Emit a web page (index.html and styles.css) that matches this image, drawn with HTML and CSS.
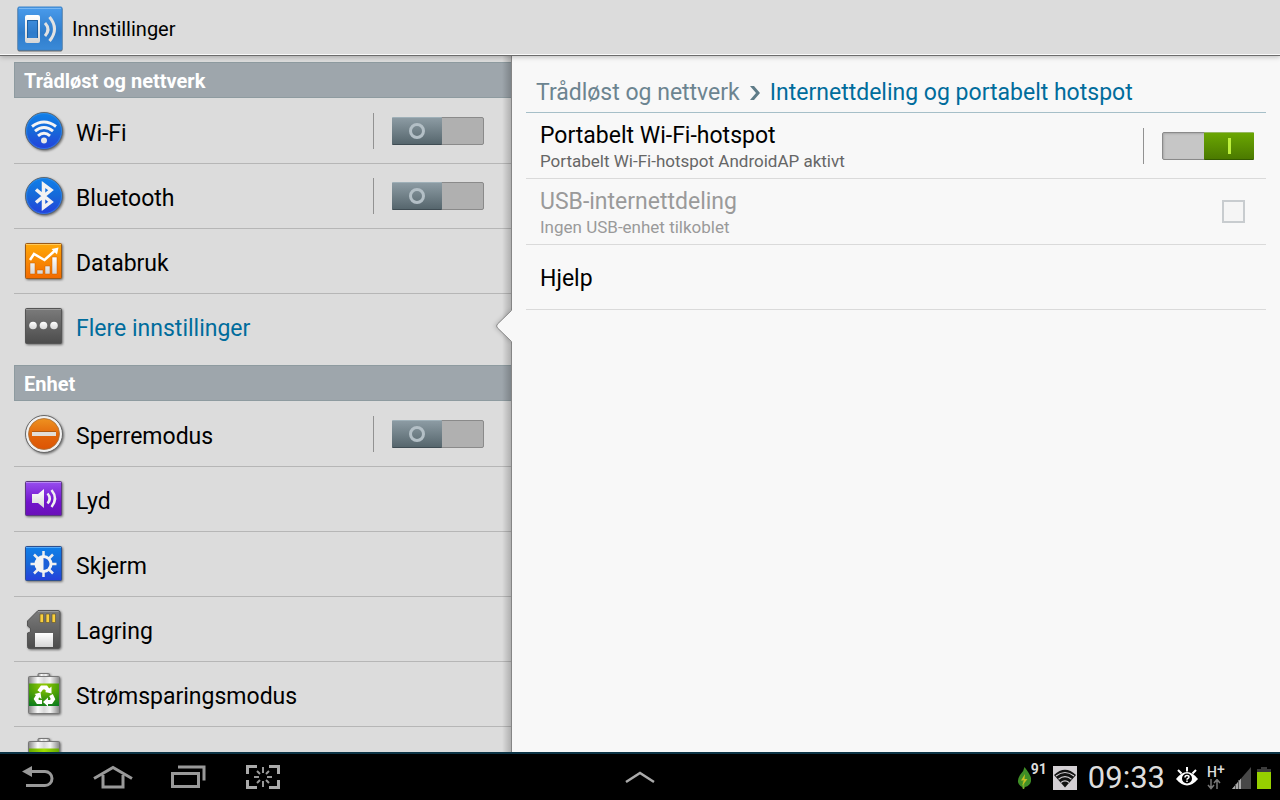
FILE: index.html
```html
<!DOCTYPE html>
<html lang="nb">
  <head>
    <meta charset="UTF-8" />
    <meta name="viewport" content="width=device-width, initial-scale=1" />
    <title>Innstillinger</title>
    <link rel="stylesheet" href="styles.css">
  </head>

  <body>
    <!-- shared gradients -->
    <svg class="defs" width="0" height="0" aria-hidden="true">
      <defs>
        <linearGradient id="blue" x2="0" y2="1"><stop offset="0" stop-color="#0f80ea"/><stop offset=".5" stop-color="#1668d8"/><stop offset="1" stop-color="#2540dc"/></linearGradient>
        <linearGradient id="sky" x2="0" y2="1"><stop offset="0" stop-color="#4a9cec"/><stop offset=".6" stop-color="#2f7ccb"/><stop offset="1" stop-color="#3a8ad8"/></linearGradient>
        <linearGradient id="orange" x2="0" y2="1"><stop offset="0" stop-color="#ffa90a"/><stop offset="1" stop-color="#f26a00"/></linearGradient>
        <linearGradient id="lock" x2="0" y2="1"><stop offset="0" stop-color="#ee9220"/><stop offset=".55" stop-color="#e2650a"/><stop offset="1" stop-color="#dc5404"/></linearGradient>
        <linearGradient id="purple" x2="0" y2="1"><stop offset="0" stop-color="#984ff0"/><stop offset=".6" stop-color="#7214cc"/><stop offset="1" stop-color="#6a10b8"/></linearGradient>
        <linearGradient id="grey" x2="0" y2="1"><stop offset="0" stop-color="#7b7b7b"/><stop offset="1" stop-color="#4c4c4c"/></linearGradient>
        <linearGradient id="white" x2="0" y2="1"><stop offset="0" stop-color="#fff"/><stop offset="1" stop-color="#d6d6d6"/></linearGradient>
        <linearGradient id="metal"><stop offset="0" stop-color="#888"/><stop offset=".3" stop-color="#fafafa"/><stop offset=".5" stop-color="#d8d8d8"/><stop offset=".7" stop-color="#f4f4f4"/><stop offset="1" stop-color="#888"/></linearGradient>
        <radialGradient id="green" cx=".5" cy=".1" r="1"><stop offset="0" stop-color="#95cd00"/><stop offset=".5" stop-color="#4a9f08"/><stop offset="1" stop-color="#087a1e"/></radialGradient>
        <linearGradient id="lime"><stop offset="0" stop-color="#68a800"/><stop offset=".5" stop-color="#a0e000"/><stop offset="1" stop-color="#68a800"/></linearGradient>
      </defs>
    </svg>

    <header class="action-bar">
      <svg class="app-icon" viewBox="0 0 46 46" width="46" height="46" aria-hidden="true">
        <rect x="1" y="1" width="44" height="43" rx="1" fill="url(#sky)" stroke="#3c83c8"/>
        <path d="M2 2.500h42" stroke="#79b8f4"/>
        <path fill-rule="evenodd" fill="url(#white)" d="M10 9h11q2 0 2 2v24q0 2-2 2H10q-2 0-2-2V11q0-2 2-2zm0 5v18h11V14z"/>
        <path fill="none" stroke="#1f5f9f" d="M10.500 32V14.500H20.500V32"/>
        <path d="M28 17q6 6.500 0 13M32.500 11q10 12 0 24" fill="none" stroke="#e2e2e2" stroke-width="3"/>
      </svg>
      <h1>Innstillinger</h1>
    </header>

    <main class="panes">
      <nav class="sidebar">
        <div class="sidebar-scroll">
          <h2>Trådløst og nettverk</h2>
          <ul>
            <li>
              <svg class="icon" viewBox="0 0 40 40" aria-hidden="true">
                <circle cx="20" cy="20" r="18.500" fill="url(#blue)" stroke="#5c6670"/>
                <circle cx="20" cy="20" r="17.500" fill="none" stroke="#3f9cf0" stroke-opacity=".5"/>
                <g fill="none" stroke="#f4f4f4" stroke-width="3">
                  <path d="M8 15.500q12-9 24 0"/>
                  <path d="M11 20.200q9-7.500 18 0"/>
                  <path d="M14 24.800q6-5 12 0"/>
                </g>
                <circle cx="20" cy="29.500" r="3" fill="#e8e8e8"/>
              </svg>
              <label class="name" for="wifi">Wi-Fi</label>
              <span class="divider"></span>
              <input class="switch" type="checkbox" role="switch" id="wifi">
            </li>
            <li>
              <svg class="icon" viewBox="0 0 40 40" aria-hidden="true">
                <circle cx="20" cy="20" r="18.500" fill="url(#blue)" stroke="#5c6670"/>
                <circle cx="20" cy="20" r="17.500" fill="none" stroke="#3f9cf0" stroke-opacity=".5"/>
                <path d="M12 13.500 27 26l-7.500 5.500v-23L27 14 12 26.500" fill="none" stroke="#f2f2f2" stroke-width="3.500"/>
              </svg>
              <label class="name" for="bluetooth">Bluetooth</label>
              <span class="divider"></span>
              <input class="switch" type="checkbox" role="switch" id="bluetooth">
            </li>
            <li>
              <svg class="icon" viewBox="0 -1 40 40" aria-hidden="true">
                <rect x="1.500" y="1.500" width="36" height="35" rx="1" fill="url(#orange)" stroke="#9b5a18"/>
                <path d="M2 2.500h35" stroke="#ffc95a"/>
                <g fill="url(#white)" stroke="#c85c00" stroke-width=".5">
                  <path d="M6 21h5v11H6zM13 28h6v4h-6zM21 24h5v8h-5zM28 15h5v17h-5z"/>
                </g>
                <path d="m6 18 4-6 10.500 6L31 8.500" fill="none" stroke="#fff" stroke-width="2.500"/>
                <path d="M27.500 7 34.500 5.500 33 12.500z" fill="#fff"/>
              </svg>
              <a class="name" href="#databruk">Databruk</a>
            </li>
            <li class="selected">
              <svg class="icon" viewBox="0 -1 40 40" aria-hidden="true">
                <rect x="1.500" y="1.500" width="36" height="35" rx="1" fill="url(#grey)" stroke="#555"/>
                <path d="M2 2.500h35" stroke="#999"/>
                <g fill="url(#white)"><circle cx="9" cy="18.500" r="3.800"/><circle cx="19.500" cy="18.500" r="3.800"/><circle cx="30" cy="18.500" r="3.800"/></g>
              </svg>
              <a class="name" href="#flere" aria-current="page">Flere innstillinger</a>
              <svg class="pointer" viewBox="0 0 17 34" width="17" height="34" aria-hidden="true">
                <path d="M17 1 3 15q-2 2 0 4l14 14z" fill="#f8f8f8"/>
                <path d="M16.500 1.500 2.500 15q-2 2 0 4l14 13.500" fill="none" stroke="#8c8c8c"/>
              </svg>
            </li>
          </ul>

          <h2>Enhet</h2>
          <ul>
            <li>
              <svg class="icon" viewBox="0 0 40 40" aria-hidden="true">
                <circle cx="20" cy="20" r="18.500" fill="#f1f1f1" stroke="#666"/>
                <circle cx="20" cy="20" r="15.500" fill="url(#lock)" stroke="#a87038" stroke-width=".8"/>
                <path d="M8 18h24v4H8z" fill="#e2ded8"/>
                <path d="M8 17.500h24" stroke="#b45a10"/>
              </svg>
              <label class="name" for="sperremodus">Sperremodus</label>
              <span class="divider"></span>
              <input class="switch" type="checkbox" role="switch" id="sperremodus">
            </li>
            <li>
              <svg class="icon" viewBox="0 -1 40 40" aria-hidden="true">
                <rect x="1.500" y="1.500" width="36" height="34" rx="1" fill="url(#purple)" stroke="#5b3a80"/>
                <path d="M2 2.500h35" stroke="#b784f4"/>
                <path d="M8 14h6l6-5v19l-6-5H8z" fill="url(#white)"/>
                <path d="M23.500 13.500q4.500 5 0 10M27.500 10q7 8.500 0 17" fill="none" stroke="#f0f0f0" stroke-width="2.500"/>
              </svg>
              <a class="name" href="#lyd">Lyd</a>
            </li>
            <li>
              <svg class="icon" viewBox="0 -1 40 40" aria-hidden="true">
                <rect x="1.500" y="1.500" width="36" height="34" rx="1" fill="url(#blue)" stroke="#2c4f90"/>
                <path d="M2 2.500h35" stroke="#52a8f8"/>
                <path d="M19.500 6v26M6.500 19h26M10 9.500l19 19M29 9.500l-19 19" stroke="#eee" stroke-width="2.500"/>
                <circle cx="19.500" cy="19" r="9" fill="#f4f4f4"/>
                <path d="M19.500 13a6 6 0 0 1 0 12z" fill="#1b5fd8"/>
              </svg>
              <a class="name" href="#skjerm">Skjerm</a>
            </li>
            <li>
              <svg class="icon" viewBox="0 -1 40 40" aria-hidden="true">
                <path d="M14 .5h20q2 0 2 2v34q0 2-2 2H5.500q-2 0-2-2V23l3-1v-4l-3-2v-5z" fill="url(#grey)" stroke="#555"/>
                <path d="M14 1.500h20.500" stroke="#999"/>
                <path d="M16 4h3.500v8.500H16zM22 4h3.500v8.500H22zM28 4h3.500v8.500H28z" fill="#f9cf3c" stroke="#675a30" stroke-width=".7"/>
                <path d="M11 23h18v14H11z" fill="url(#white)"/>
              </svg>
              <a class="name" href="#lagring">Lagring</a>
            </li>
            <li>
              <svg class="icon" viewBox="0 0 40 40" aria-hidden="true">
                <path d="M14 3V.5q0-1 1-1h9.500q1 0 1 1V3" fill="url(#metal)" stroke="#777"/>
                <rect x="4.500" y="2.500" width="31" height="37" rx="1" fill="url(#metal)" stroke="#777"/>
                <path d="M5 9.500h30V32H5z" fill="url(#green)"/>
                <g fill="none" stroke="#fff" stroke-width="4">
                  <path d="m15 17.500 3-4h4l2.500 3.500"/>
                  <path d="m27 21 2 4-2 3h-4"/>
                  <path d="M18 28h-4l-2-3 2-3.500"/>
                </g>
                <path d="m21 18 6.500 1.500 0-7zM24 23.500v9l-5-4.500zM10.500 20l6-1.500 1 6.500z" fill="#fff"/>
              </svg>
              <a class="name" href="#strom">Strømsparingsmodus</a>
            </li>
            <li>
              <svg class="icon" viewBox="0 0 40 40" aria-hidden="true">
                <path d="M14 3V.5q0-1 1-1h9.500q1 0 1 1V3" fill="url(#metal)" stroke="#777"/>
                <rect x="4.500" y="2.500" width="31" height="37" rx="1" fill="url(#metal)" stroke="#777"/>
                <path d="M5 9.500h30V32H5z" fill="url(#lime)"/>
              </svg>
              <a class="name" href="#batteri">Batteri</a>
            </li>
          </ul>
        </div>
      </nav>

      <section class="detail">
        <div class="breadcrumb">
          <a href="#tradlost">Trådløst og nettverk</a>
          <svg viewBox="0 0 10 14" width="10" height="14" aria-hidden="true"><path d="m0 0h4l6 7-6 7H0l6-7z" fill="#5f7c88"/></svg>
          <strong>Internettdeling og portabelt hotspot</strong>
        </div>
        <ul>
          <li>
            <label class="text" for="hotspot">
              <span class="title">Portabelt Wi-Fi-hotspot</span>
              <span class="summary">Portabelt Wi-Fi-hotspot AndroidAP aktivt</span>
            </label>
            <span class="divider"></span>
            <input class="switch" type="checkbox" role="switch" id="hotspot" checked>
          </li>
          <li class="disabled">
            <label class="text" for="usb">
              <span class="title">USB-internettdeling</span>
              <span class="summary">Ingen USB-enhet tilkoblet</span>
            </label>
            <input class="tick" type="checkbox" id="usb" disabled>
          </li>
          <li>
            <a class="text" href="#hjelp"><span class="title">Hjelp</span></a>
          </li>
        </ul>
      </section>
    </main>

    <footer class="system-bar">
      <div class="keys">
        <button type="button" aria-label="Tilbake">
          <svg viewBox="0 0 34 24" width="34" height="24"><path d="M10 6.500h14a7 7 0 0 1 0 14H5" fill="none" stroke="#999" stroke-width="3"/><path d="M1 6.500 11 1v11z" fill="#999"/></svg>
        </button>
        <button type="button" aria-label="Hjem">
          <svg viewBox="0 0 40 24" width="40" height="24"><path d="M1 13.500 20 2.500l19 11" fill="none" stroke="#999" stroke-width="3"/><path d="M10 10v12h20V10" fill="none" stroke="#999" stroke-width="3"/></svg>
        </button>
        <button type="button" aria-label="Nylige apper">
          <svg viewBox="0 0 36 24" width="36" height="24"><path d="M2.500 8.500h26v13h-26z" fill="none" stroke="#999" stroke-width="3"/><path d="M8 2h26v13.500" fill="none" stroke="#999" stroke-width="3"/></svg>
        </button>
        <button type="button" aria-label="Skjermbilde">
          <svg viewBox="0 0 34 24" width="34" height="24"><path d="M1.500 9V1.500H11M23 1.500h9.500V9M32.500 15v7.500H23M11 22.500H1.500V15" fill="none" stroke="#aaa" stroke-width="3"/><path d="M17 2v6M17 16v6M8 12h5M21 12h5M11 6l3 3M23 6l-3 3M11 18l3-3M23 18l-3-3" fill="none" stroke="#999" stroke-width="2"/></svg>
        </button>
      </div>

      <button class="tray" type="button" aria-label="Vis miniapper">
        <svg viewBox="0 0 30 14" width="30" height="14"><path d="M1 12 15 3l14 9" fill="none" stroke="#aaa" stroke-width="2.500"/></svg>
      </button>

      <div class="status">
        <svg viewBox="0 0 14 24" width="14" height="24" aria-hidden="true">
          <path d="M7.500 1Q7 5 3 9-2 17 5 21l1.500 2 1.500-2q7-2 6-9-1-4-6.500-11z" fill="#3f8f26"/>
          <path d="M6.500 23V15" stroke="#7aa82a" fill="none" stroke-width="1.500"/>
          <path d="M8 8 4 14.500h3L5 20l5.500-7h-3z" fill="#c8c020"/>
        </svg>
        <span class="level">91</span>
        <svg viewBox="0 0 24 24" width="24" height="24" aria-hidden="true">
          <rect width="24" height="24" fill="#d4d0d4"/>
          <path d="M1 9Q12-1.500 23 9L12 21.500z" fill="#111"/>
          <path d="M3 10q9-7 18 0M5.500 13.200q6.500-5 13 0M8 16.400q4-3 8 0" fill="none" stroke="#d4d0d4" stroke-width="1.200"/>
        </svg>
        <time>09:33</time>
        <svg viewBox="0 0 22 22" width="22" height="22" aria-hidden="true">
          <path d="M0 12Q11-2 22 12 11 25 0 12z" fill="#fff"/>
          <path d="m2 3 3.500 3.500M11 0v4.500M20 3l-3.500 3.500" stroke="#fff" stroke-width="2"/>
          <circle cx="11" cy="11.500" r="5"/>
          <path d="M9 10.500q0-2 2-2t2 1.500q0 1-1.200 1.500-.8.500-.8 1.200M11 13.500v1.500" fill="none" stroke="#fff" stroke-width="1.500"/>
        </svg>
        <span class="network">
          H<sup>+</sup>
          <svg viewBox="0 0 14 11" width="14" height="11" aria-hidden="true"><path d="M4 0v9M1 6l3 3.500L7 6M10 10V1M7 4l3-3.500L13 4" fill="none" stroke="#777" stroke-width="1.500"/></svg>
        </span>
        <svg viewBox="0 0 19 22" width="19" height="22" aria-hidden="true">
          <path d="M0 22 19 0v22z" fill="#484848"/>
          <path d="M0 22 9 11.500V22z" fill="#aaa"/>
          <path d="M3.500 17v5M6.500 13v9" stroke="#555"/>
        </svg>
        <svg class="battery" viewBox="0 0 14 22" width="14" height="22" aria-hidden="true">
          <path d="M4 0h6v2h4v20H0V2h4z" fill="#3c3c3c"/>
          <path d="M0 5h14v17H0z" fill="#96d000"/>
        </svg>
      </div>
    </footer>
  </body>
</html>
```

FILE: styles.css
```css
*,
*::before,
*::after {
  box-sizing: border-box;
}

body {
  display: flex;
  flex-direction: column;
  height: 100vh;
  margin: 0;
  overflow: hidden;
  background: #f8f8f8;
  color: #000;
  font: 23px/28px Roboto, "Noto Sans", sans-serif;
}

h1,
h2,
ul {
  margin: 0;
  padding: 0;
}

ul {
  list-style: none;
}

a {
  color: inherit;
  text-decoration: none;
}

svg {
  display: block;
  flex: none;
}

button {
  display: flex;
  align-items: center;
  justify-content: center;
  padding: 0;
  border: 0;
  background: none;
}

.defs {
  position: absolute;
}

/* top bar */
.action-bar {
  position: relative;
  z-index: 2;
  display: flex;
  align-items: center;
  gap: 9px;
  height: 56px;
  padding: 2px 17px 0;
  background: #dcdcdc;
  border-bottom: 1px solid #6c6c6c;
  box-shadow: inset 0 -1px #fafafa, 0 1px 5px rgba(0, 0, 0, 0.25);
}

.action-bar h1 {
  font-size: 20px;
  font-weight: 400;
}

.app-icon {
  filter: drop-shadow(0 1px 0 #666);
}

.panes {
  display: flex;
  flex: 1;
  min-height: 0;
}

/* left pane */
.sidebar {
  position: relative;
  width: 40%;
  background: #dcdcdc;
}

.sidebar::after {
  content: "";
  position: absolute;
  top: 0;
  right: 0;
  bottom: 0;
  width: 10px;
  border-right: 1px solid #858585;
  background: linear-gradient(to right, transparent, rgba(0, 0, 0, 0.2));
  pointer-events: none;
}

.sidebar-scroll {
  height: 100%;
  padding: 6px 0 0 14px;
  overflow: hidden;
}

.sidebar h2 {
  height: 36px;
  padding: 0 9px;
  border: 1px solid #8e9ba0;
  background: #9ea6ac;
  color: #fff;
  font-size: 20px;
  font-weight: 700;
  line-height: 36px;
}

.sidebar ul {
  padding: 1px 0 6px;
}

.sidebar li {
  position: relative;
  display: flex;
  align-items: center;
  height: 65px;
  padding: 0 28px 0 10px;
  border-bottom: 1px solid #b6b6b6;
}

.sidebar li:last-child {
  border-bottom-color: transparent;
}

.icon {
  width: 40px;
  height: 40px;
  margin-right: 12px;
  overflow: visible;
  filter: drop-shadow(1px 1px 1px rgba(0, 0, 0, 0.5));
}

.name {
  flex: 1;
  padding-top: 6px;
}

.selected .name {
  color: #006c9c;
}

.pointer {
  position: absolute;
  z-index: 1;
  top: 15px;
  right: 0;
  filter: drop-shadow(-1px 0 2px rgba(0, 0, 0, 0.2));
}

/* controls */
.divider {
  width: 1px;
  height: 36px;
  margin-right: 18px;
  background: #929292;
}

.switch {
  position: relative;
  flex: none;
  width: 92px;
  height: 28px;
  margin: 0;
  appearance: none;
  border: 1px solid #8a8a8a;
  border-radius: 2px;
  background: #b0b0b0;
}

.switch::before {
  content: "";
  position: absolute;
  top: -1px;
  left: -1px;
  width: 50px;
  height: 28px;
  border-top: 1px solid #9fb0b8;
  border-bottom: 1px solid #3f4c53;
  border-radius: 1px;
  background: linear-gradient(#8c9ba3, #56666d);
}

.switch::after {
  content: "";
  position: absolute;
  top: 5px;
  left: 16px;
  width: 16px;
  height: 16px;
  border: 3px solid #b3bfc6;
  border-radius: 50%;
}

.switch:checked {
  background: #c6c6c6;
  box-shadow: inset 1px 1px 2px rgba(0, 0, 0, 0.15);
}

.switch:checked::before {
  left: 41px;
  border-top-color: #96b860;
  border-bottom-color: #345c00;
  background: linear-gradient(#6aa602, #4b7a00);
}

.switch:checked::after {
  left: 65px;
  width: 3px;
  border: 0;
  border-radius: 0;
  background: #bdf03c;
}

.tick {
  width: 23px;
  height: 23px;
  margin: 0 9px 0 0;
  appearance: none;
  border: 2px solid #c8cccf;
  background: #f5f5f5;
}

/* right pane */
.detail {
  flex: 1;
  padding: 0 14px;
}

.breadcrumb {
  display: flex;
  align-items: center;
  gap: 10px;
  height: 57px;
  padding: 18px 10px 0;
  border-bottom: 1px solid #a6bfc8;
  color: #6c8490;
}

.breadcrumb strong {
  color: #006c9c;
  font-weight: 400;
}

.detail li {
  display: flex;
  align-items: center;
  height: 66px;
  padding: 0 12px 0 14px;
  border-bottom: 1px solid #dadada;
}

.detail li:last-child {
  height: 65px;
}

.text {
  display: flex;
  flex: 1;
  flex-direction: column;
  padding-top: 3px;
}

.summary {
  color: #666;
  font-size: 17px;
  line-height: 22px;
}

.disabled .title,
.disabled .summary {
  color: #9a9a9a;
}

/* bottom bar */
.system-bar {
  display: grid;
  grid-template-columns: 1fr auto 1fr;
  height: 48px;
  border-top: 2px solid #0c3446;
  background: #000;
  color: #ddd;
}

.keys {
  display: flex;
}

.keys button {
  width: 75px;
}

.tray {
  width: 60px;
}

.status {
  display: flex;
  align-items: center;
  justify-content: flex-end;
  padding: 2px 9px 0 0;
}

.level {
  align-self: flex-start;
  margin-right: 6px;
  font-size: 14px;
  font-weight: 700;
  line-height: 26px;
}

.status time {
  margin: 0 11px;
  font-size: 31px;
}

.network {
  width: 18px;
  margin: 0 7px 0 9px;
  font-size: 14px;
  font-weight: 500;
  line-height: 13px;
  white-space: nowrap;
}

.network sup {
  font-size: 14px;
  line-height: 0;
  vertical-align: 3px;
}

.battery {
  margin-left: 6px;
}
```
